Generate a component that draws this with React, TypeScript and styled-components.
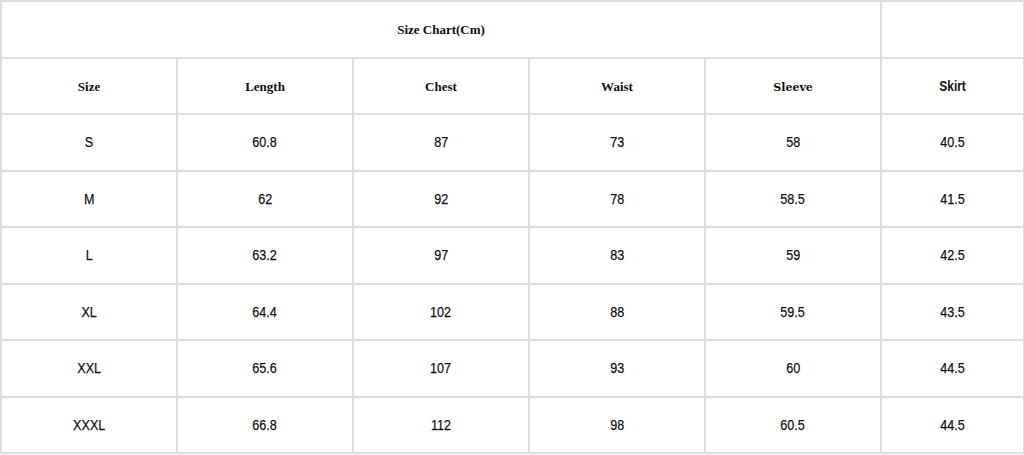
import React from "react";
import styled, { createGlobalStyle } from "styled-components";

const Global = createGlobalStyle`
  html, body { margin: 0; padding: 0; background: #ffffff; }
  #root { width: 1024px; height: 455px; }
`;

const Table = styled.table`
  border-collapse: collapse;
  width: 1023px;
  height: 454px;
  table-layout: fixed;
  border: 2px solid #dedede;
`;

type Kind = "title" | "serif" | "slab" | "sansbold" | "data";

const Cell = styled.td`
  border: 2px solid #dedede;
  text-align: center;
  vertical-align: middle;
  padding: 0;
  height: 20px;
`;

const Label = styled.span<{ $kind: Kind }>`
  display: inline-block;
  color: #111;
  font-family: ${(p) =>
    p.$kind === "title" || p.$kind === "serif"
      ? '"Liberation Serif", "Times New Roman", serif'
      : p.$kind === "slab"
      ? '"DejaVu Serif", serif'
      : '"Liberation Sans", Arial, sans-serif'};
  font-weight: ${(p) => (p.$kind === "data" ? 400 : 700)};
  font-size: ${(p) =>
    p.$kind === "title" || p.$kind === "serif"
      ? "13px"
      : p.$kind === "slab"
      ? "11px"
      : p.$kind === "sansbold"
      ? "14px"
      : "15px"};
  transform: ${(p) =>
    p.$kind === "data" ? "scaleX(0.84)" : p.$kind === "sansbold" ? "scaleX(0.85)" : "none"};
  -webkit-text-stroke: ${(p) => (p.$kind === "data" ? "0.25px #111" : "0")};
`;

const widths = [176, 176, 176, 176, 176, 143];

const headers: { label: string; kind: Kind }[] = [
  { label: "Size", kind: "serif" },
  { label: "Length", kind: "serif" },
  { label: "Chest", kind: "serif" },
  { label: "Waist", kind: "serif" },
  { label: "Sleeve", kind: "slab" },
  { label: "Skirt", kind: "sansbold" },
];

const rows = [
  ["S", "60.8", "87", "73", "58", "40.5"],
  ["M", "62", "92", "78", "58.5", "41.5"],
  ["L", "63.2", "97", "83", "59", "42.5"],
  ["XL", "64.4", "102", "88", "59.5", "43.5"],
  ["XXL", "65.6", "107", "93", "60", "44.5"],
  ["XXXL", "66.8", "112", "98", "60.5", "44.5"],
];

export default function App() {
  return (
    <>
      <Global />
      <Table>
        <colgroup>
          {widths.map((w, i) => (
            <col key={i} style={{ width: w }} />
          ))}
        </colgroup>
        <tbody>
          <tr>
            <Cell colSpan={5}>
              <Label $kind="title">Size Chart(Cm)</Label>
            </Cell>
            <Cell />
          </tr>
          <tr>
            {headers.map((h) => (
              <Cell key={h.label}>
                <Label $kind={h.kind}>{h.label}</Label>
              </Cell>
            ))}
          </tr>
          {rows.map((r) => (
            <tr key={r[0]}>
              {r.map((v, i) => (
                <Cell key={i}>
                  <Label $kind="data">{v}</Label>
                </Cell>
              ))}
            </tr>
          ))}
        </tbody>
      </Table>
    </>
  );
}
